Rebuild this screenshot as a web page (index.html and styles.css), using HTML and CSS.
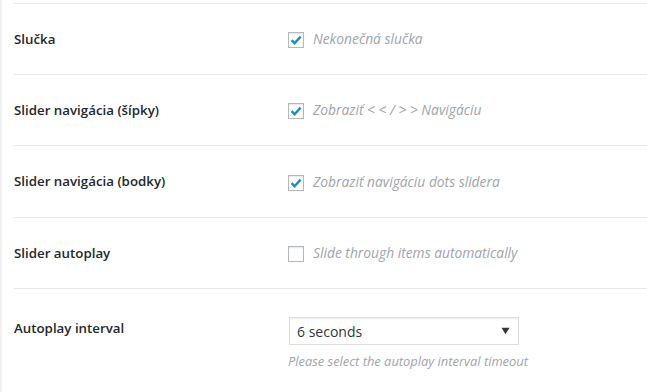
FILE: index.html
```html
<!DOCTYPE html>
<html lang="sk">
<head>
    <meta charset="UTF-8">
    <meta name="viewport" content="width=device-width, initial-scale=1.0">
    <title>Nastavenia slidera</title>
    <link rel="stylesheet" href="styles.css">
</head>
<body>
    <div class="panel">
        <div class="form-row">
            <div class="row-label">Slučka</div>
            <div class="row-field">
                <label class="check">
                    <span class="check-box checked">
                        <svg viewBox="0 0 16 16" width="16" height="16"><path d="M3.6 8.2 L6.6 11.2 L12.6 4.6" fill="none" stroke="#1e8cbe" stroke-width="2.4"/></svg>
                    </span>
                    <span class="check-text">Nekonečná slučka</span>
                </label>
            </div>
        </div>

        <div class="form-row">
            <div class="row-label">Slider navigácia (šípky)</div>
            <div class="row-field">
                <label class="check">
                    <span class="check-box checked">
                        <svg viewBox="0 0 16 16" width="16" height="16"><path d="M3.6 8.2 L6.6 11.2 L12.6 4.6" fill="none" stroke="#1e8cbe" stroke-width="2.4"/></svg>
                    </span>
                    <span class="check-text">Zobraziť &lt; &lt; / &gt; &gt; Navigáciu</span>
                </label>
            </div>
        </div>

        <div class="form-row">
            <div class="row-label">Slider navigácia (bodky)</div>
            <div class="row-field">
                <label class="check">
                    <span class="check-box checked">
                        <svg viewBox="0 0 16 16" width="16" height="16"><path d="M3.6 8.2 L6.6 11.2 L12.6 4.6" fill="none" stroke="#1e8cbe" stroke-width="2.4"/></svg>
                    </span>
                    <span class="check-text">Zobraziť navigáciu dots slidera</span>
                </label>
            </div>
        </div>

        <div class="form-row">
            <div class="row-label">Slider autoplay</div>
            <div class="row-field">
                <label class="check">
                    <span class="check-box"></span>
                    <span class="check-text">Slide through items automatically</span>
                </label>
            </div>
        </div>

        <!-- posledný riadok: výber intervalu -->
        <div class="form-row form-row-top">
            <div class="row-label">Autoplay interval</div>
            <div class="row-field">
                <div class="select">
                    <span>6 seconds</span>
                    <svg class="select-arrow" viewBox="0 0 10 8" width="9" height="8"><polygon points="0.5,0.5 9.5,0.5 5,7.5" fill="#32373c"/></svg>
                </div>
                <p class="description">Please select the autoplay interval timeout</p>
            </div>
        </div>
    </div>
</body>
</html>
```

FILE: styles.css
```css
/* základ */
body {
    margin: 0;
    background-color: #f1f1f1;
    font-family: "Open Sans", "Liberation Sans", sans-serif;
    color: #23282d;
}
.panel {
    margin-left: 2px;
    height: 392px;
    padding: 3px 0 0 12px;
    background-color: #fff;
    box-sizing: border-box;
}

/* riadky formulára */
.form-row {
    display: flex;
    align-items: center;
    height: 71px;
    border-top: 1px solid #e8e8e8;
    box-sizing: border-box;
}
.form-row:nth-child(3) {
    height: 72px;
}
.row-label {
    width: 274px;
    flex-shrink: 0;
    font-size: 13.3px;
    font-weight: 600;
    line-height: 20px;
    padding-bottom: 1px;
}
.row-field {
    flex: 1;
}
.form-row-top {
    align-items: flex-start;
    height: auto;
}
.form-row-top .row-label {
    padding-top: 29px;
}
.form-row-top .row-field {
    padding-top: 28px;
}

/* checkbox */
.check {
    display: flex;
    align-items: center;
    gap: 9px;
}
.check-box {
    width: 16px;
    height: 16px;
    border: 1px solid #b4b9be;
    box-shadow: inset 0 1px 2px rgba(0,0,0,0.1);
    box-sizing: border-box;
    display: flex;
    align-items: center;
    justify-content: center;
    margin-top: 2px;
}
.check-box svg {
    display: block;
    flex-shrink: 0;
}
.check-text {
    font-size: 13.8px;
    font-style: italic;
    color: #a0a5aa;
    line-height: 20px;
}

/* select */
.select {
    width: 230px;
    height: 28px;
    margin-left: 1px;
    border: 1px solid #ddd;
    box-shadow: inset 0 1px 2px rgba(0,0,0,0.07);
    box-sizing: border-box;
    display: flex;
    align-items: center;
    justify-content: space-between;
    padding: 0 8px 0 7px;
    font-size: 14px;
    color: #32373c;
}
.select-arrow {
    display: block;
}
.description {
    margin: 7px 0 0;
    font-size: 12.9px;
    font-style: italic;
    color: #a0a5aa;
}
```
